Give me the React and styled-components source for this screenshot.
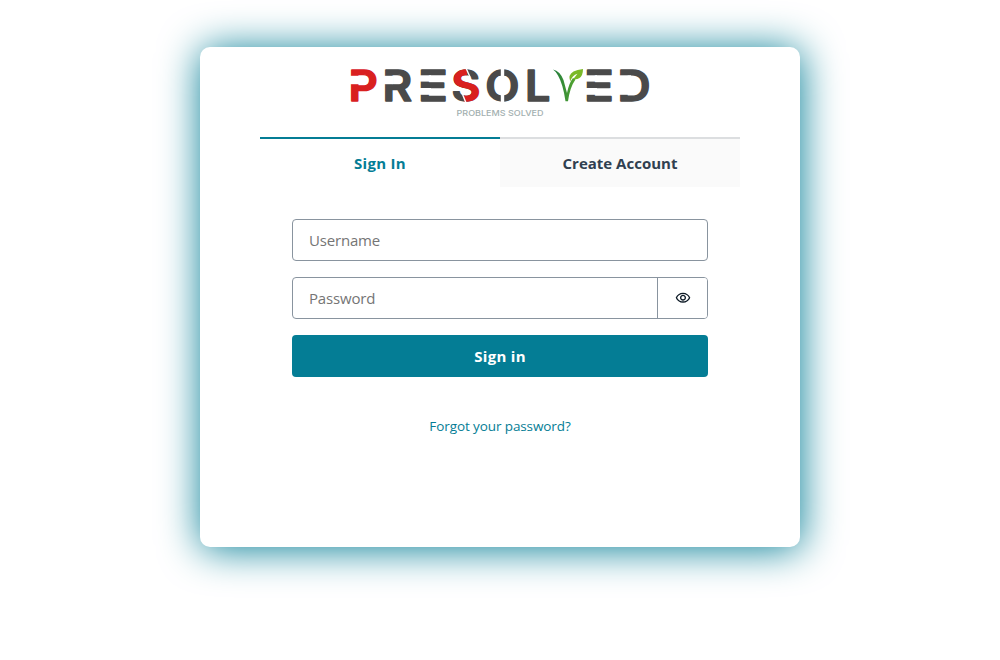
import React from "react";
import styled, { createGlobalStyle } from "styled-components";
import { MdOutlineVisibility } from "react-icons/md";

const teal = "#047d95";
const ink = "#4a4a4a";
const red = "#d9201f";

const GlobalStyle = createGlobalStyle`
  * { box-sizing: border-box; }
  body {
    margin: 0;
    background: #fff;
    color: #304050;
    font-family: "Open Sans", "Noto Sans", sans-serif;
    font-size: 16px;
    line-height: 24px;
  }
`;

const Page = styled.main`
  display: flex;
  justify-content: center;
  height: 660px;
  padding-top: 47px;
  overflow: hidden;
`;

const Card = styled.section`
  display: flex;
  flex-direction: column;
  align-items: center;
  width: 600px;
  height: 500px;
  padding-top: 18px;
  border-radius: 10px;
  background: #fff;
  box-shadow: 1px 2px 40px ${teal};
`;

const Logo = styled.svg`
  display: block;
  width: 308px;
  height: 56px;
  margin-bottom: 16px;
`;

const Letter = styled.text`
  font-family: Inter, sans-serif;
  font-size: 42px;
  font-weight: 600;
  fill: ${(p) => p.$color || ink};
  stroke: ${(p) => p.$color || ink};
  stroke-width: 1.4px;
  stroke-linejoin: round;
`;

const Tagline = styled.text`
  font-family: Inter, sans-serif;
  font-size: 8px;
  font-weight: 500;
  fill: #a3b0b0;
`;

const Tabs = styled.div`
  display: flex;
  width: 480px;
`;

const Tab = styled.button`
  flex: 1;
  height: 50px;
  padding: 0;
  border: 0;
  border-top: 2px solid ${(p) => (p.$active ? teal : "#dcdee0")};
  background: ${(p) => (p.$active ? "#fff" : "#fafafa")};
  color: ${(p) => (p.$active ? teal : "#304050")};
  font: 700 15px/24px "Open Sans", sans-serif;
  letter-spacing: ${(p) => (p.$active ? "0.3px" : "0")};
`;

const Form = styled.form`
  display: flex;
  flex-direction: column;
  gap: 16px;
  width: 416px;
  margin-top: 32px;
`;

const Field = styled.div`
  display: flex;
  height: 42px;
  border: 1px solid #89949f;
  border-radius: 4px;
  overflow: hidden;
`;

const Input = styled.input`
  flex: 1;
  min-width: 0;
  padding: 0 16px 1px;
  border: 0;
  outline: 0;
  background: transparent;
  font: 400 15px/24px "Open Sans", sans-serif;
  letter-spacing: -0.18px;
  &::placeholder { color: #757575; opacity: 1; }
`;

const Reveal = styled.button`
  display: flex;
  align-items: center;
  justify-content: center;
  width: 50px;
  padding: 0;
  border: 0;
  border-left: 1px solid #89949f;
  background: #fff;
  color: #0d1a26;
`;

const Submit = styled.button`
  height: 42px;
  padding: 0;
  border: 0;
  border-radius: 4px;
  background: ${teal};
  color: #fff;
  font: 700 15px/24px "Open Sans", sans-serif;
  letter-spacing: 0.3px;
`;

const Forgot = styled.a`
  margin-top: 37px;
  color: ${teal};
  font-size: 13.5px;
  line-height: 24px;
  letter-spacing: -0.1px;
`;

function Glyph({ char, x, sx = 1, color }) {
  return (
    <Letter $color={color} transform={`translate(${x} 100.6) scale(${sx} 1)`}>
      {char}
    </Letter>
  );
}

function Wordmark() {
  return (
    <Logo viewBox="346 65 308 56" role="img" aria-label="Presolved, problems solved">
      <defs>
        <clipPath id="ribbon">
          <path d="M451 67H467V79L481 88V103H464V91L451 84Z" />
        </clipPath>
        <linearGradient id="stem">
          <stop offset="0" stopColor="#1f7a3c" />
          <stop offset="1" stopColor="#55a630" />
        </linearGradient>
      </defs>
      <Glyph char="P" x={348.4} sx={1.08} color={red} />
      <Glyph char="R" x={382.4} sx={1.08} />
      <Glyph char="E" x={417.9} sx={1.17} />
      <Glyph char="S" x={451.6} sx={1.05} />
      <g clipPath="url(#ribbon)">
        <Glyph char="S" x={451.6} sx={1.05} color={red} />
      </g>
      <Glyph char="O" x={485.2} sx={1.06} />
      <Glyph char="L" x={525} sx={1.07} />
      <Glyph char="E" x={583.9} sx={1.17} />
      <Glyph char="D" x={617.4} sx={1.09} />
      <g fill="#fff">
        <rect x="349" y="75.8" width="10" height="8.4" />
        <rect x="383" y="75.8" width="10" height="8.4" />
        <rect x="419" y="75.3" width="12" height="6.3" />
        <rect x="419" y="88" width="12" height="6.8" />
        <rect x="585" y="75.3" width="12" height="6.3" />
        <rect x="585" y="88" width="12" height="6.8" />
        <rect x="619" y="75.3" width="12" height="19.5" />
        <rect x="500.8" y="67" width="3.4" height="10" />
        <rect x="500.8" y="93" width="3.4" height="10" />
      </g>
      <g stroke="#fff" strokeWidth="1.4">
        <path d="M465.5 67L470 77" />
        <path d="M462 93L466 103" />
      </g>
      <path d="M553 69.5Q560 71 563.5 80L567 93Q569 83 573 78L575.5 79.5Q570 87 568 101.3H565.5Q563 84 558 75.5Q556 71.5 553 69.5Z" fill="url(#stem)" />
      <path d="M570.3 81.5Q567.5 75 573.5 71.5Q577 69.5 583 69Q583 75.5 579.5 78Q576.5 80 573.3 79L577.5 73.8Q572 75.5 570.3 81.5Z" fill="#7bb928" />
      <Tagline x="456.5" y="115.7" textLength="87" lengthAdjust="spacingAndGlyphs">PROBLEMS SOLVED</Tagline>
    </Logo>
  );
}

export default function App() {
  return (
    <>
      <GlobalStyle />
      <Page>
        <Card>
          <Wordmark />
          <Tabs>
            <Tab $active>Sign In</Tab>
            <Tab>Create Account</Tab>
          </Tabs>
          <Form onSubmit={(e) => e.preventDefault()}>
            <Field>
              <Input placeholder="Username" />
            </Field>
            <Field>
              <Input type="password" placeholder="Password" />
              <Reveal type="button" aria-label="Show password">
                <MdOutlineVisibility size={16} />
              </Reveal>
            </Field>
            <Submit>Sign in</Submit>
          </Form>
          <Forgot>Forgot your password?</Forgot>
        </Card>
      </Page>
    </>
  );
}
